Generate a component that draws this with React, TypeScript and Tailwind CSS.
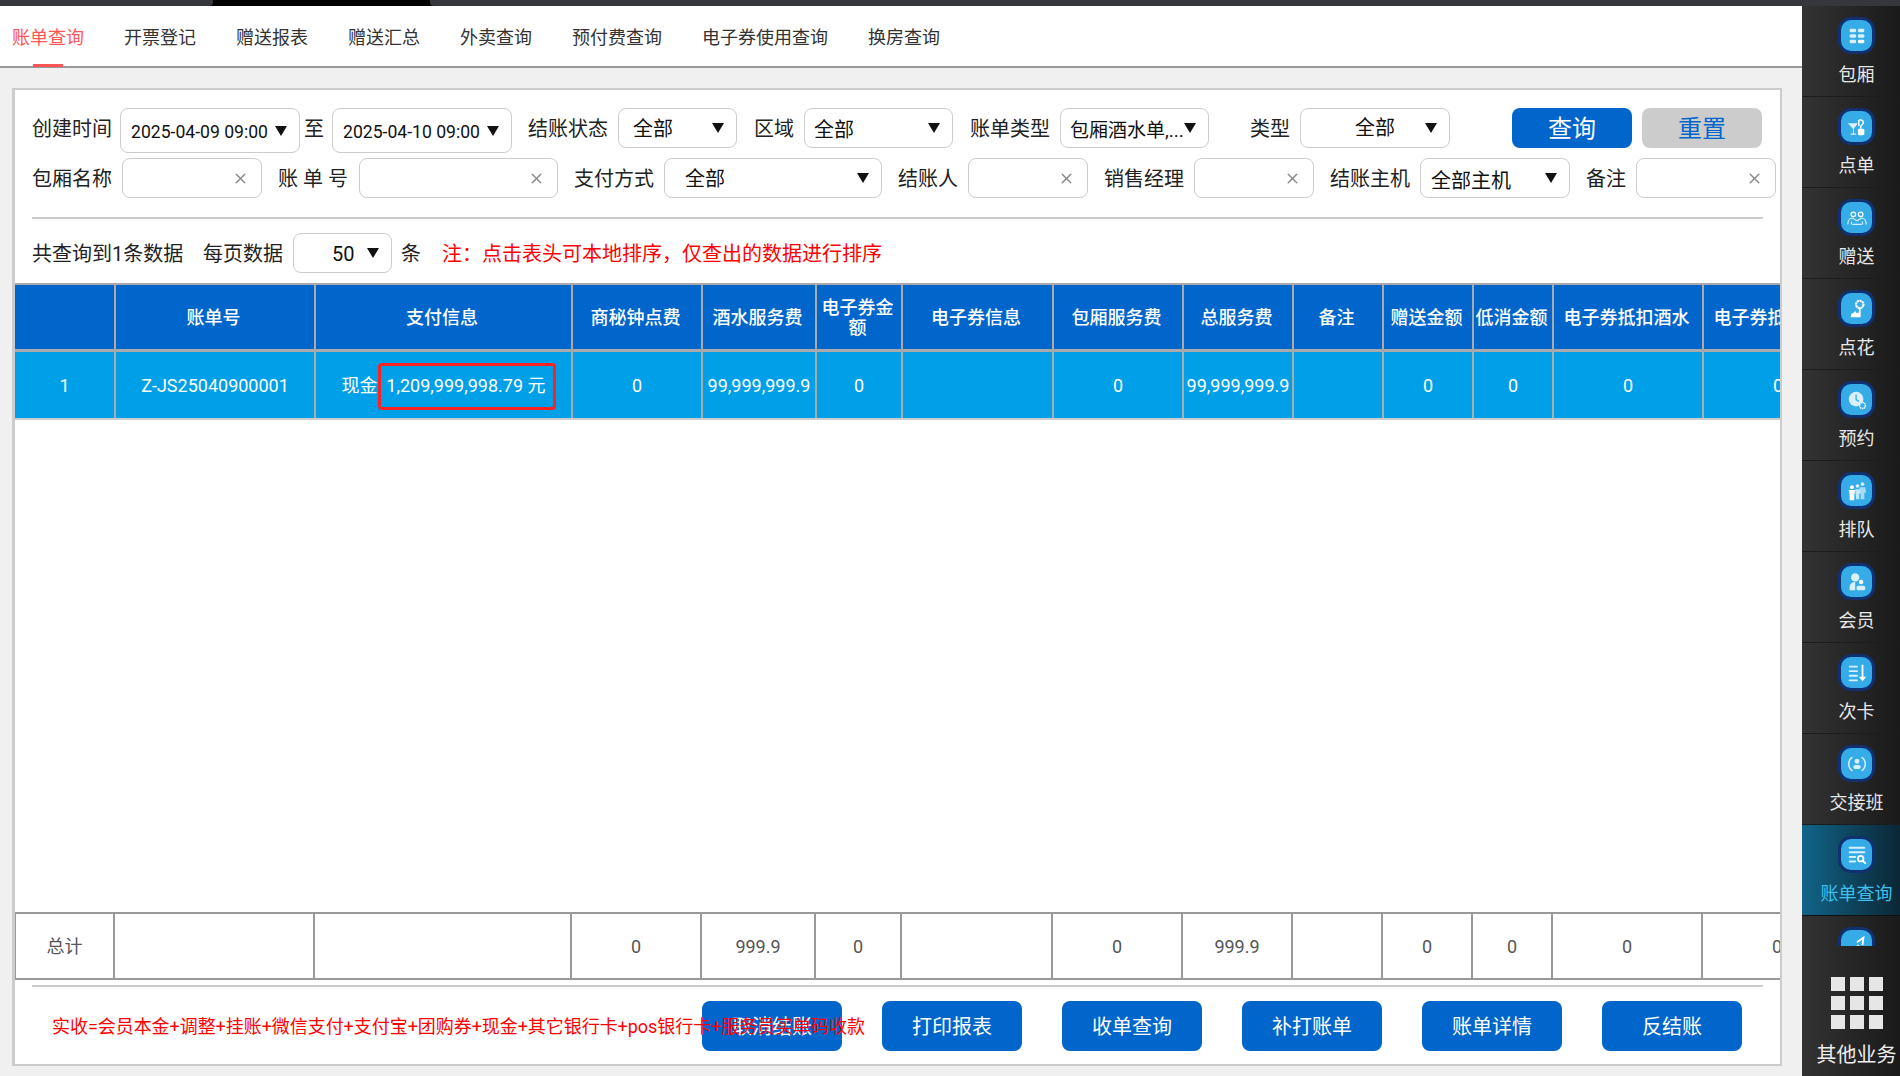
import React from 'react';
import { X } from 'lucide-react';

const COLS =
  'grid grid-cols-[101px_200px_257px_130px_114px_86px_151px_130px_110px_90px_90px_80px_150px_150px]';
const TOTAL_COLS =
  'grid grid-cols-[99px_200px_257px_130px_114px_86px_151px_130px_110px_90px_90px_80px_150px_150px]';

const headers = [
  '',
  '账单号',
  '支付信息',
  '商秘钟点费',
  '酒水服务费',
  '电子券金额',
  '电子券信息',
  '包厢服务费',
  '总服务费',
  '备注',
  '赠送金额',
  '低消金额',
  '电子券抵扣酒水',
  '电子券抵扣包厢',
];
const rowData = ['1', 'Z-JS25040900001', '', '0', '99,999,999.9', '0', '', '0', '99,999,999.9', '', '0', '0', '0', '0'];
const totals = ['总计', '', '', '0', '999.9', '0', '', '0', '999.9', '', '0', '0', '0', '0'];

const tabs = ['账单查询', '开票登记', '赠送报表', '赠送汇总', '外卖查询', '预付费查询', '电子券使用查询', '换房查询'];

const Arrow = () => (
  <svg width="12" height="10" viewBox="0 0 12 10" className="shrink-0">
    <polygon points="0,0 12,0 6,10" fill="#111" />
  </svg>
);

const Label = ({ className, children }: { className: string; children: React.ReactNode }) => (
  <span className={`shrink-0 whitespace-pre text-[20px] leading-[42px] text-[#222] ${className}`}>{children}</span>
);

const Select = ({
  className,
  text,
  textClass,
}: {
  className: string;
  text: string;
  textClass: string;
}) => (
  <div className={`flex h-10 shrink-0 items-center justify-between rounded-lg border border-[#ccc] bg-white pr-3 ${className}`}>
    <span className={`whitespace-nowrap text-[20px] text-[#111] ${textClass}`}>{text}</span>
    <Arrow />
  </div>
);

const DateBox = ({ className, text }: { className: string; text: string }) => (
  <div className={`flex h-[45px] shrink-0 items-center justify-between rounded-lg border border-[#ccc] bg-white pl-[10px] pr-[12px] ${className}`}>
    <span className="whitespace-nowrap pt-[3px] text-[17.6px] text-[#111]">{text}</span>
    <Arrow />
  </div>
);

const ClearInput = ({ className }: { className: string }) => (
  <div className={`flex h-10 shrink-0 items-center justify-end rounded-lg border border-[#ccc] bg-white pr-[12px] ${className}`}>
    <X size={17} strokeWidth={2} className="text-[#888]" />
  </div>
);

const Btn = ({ text }: { text: string }) => (
  <div className="flex h-[50px] w-[140px] items-center justify-center rounded-lg bg-[#0066cc] pt-[1px] text-[20px] text-white">
    {text}
  </div>
);

const L = '#d8f0ff';
const W = '#ffffff';

const icons: Record<string, React.ReactNode> = {
  room: (
    <>
      <rect x="4" y="4" width="7" height="4" rx="1.5" fill={L} />
      <rect x="13" y="4" width="7" height="4" rx="1.5" fill={L} />
      <rect x="4" y="10" width="7" height="4" rx="1.5" fill={L} />
      <rect x="13" y="10" width="7" height="4" rx="1.5" fill={L} />
      <rect x="4" y="16" width="7" height="4" rx="1.5" fill={L} />
      <rect x="13" y="16" width="7" height="4" rx="1.5" fill={W} />
    </>
  ),
  order: (
    <>
      <path d="M2 8h11l-4.500 6v5H11v1.500H5V19h2.500v-5z" fill={L} />
      <path d="M14 11V5a3 3 0 0 1 5 2c0 2-3 2.500-3 5v2" stroke={W} strokeWidth="1.600" fill="none" />
      <rect x="13" y="14" width="7" height="7" rx="1.500" fill={W} />
    </>
  ),
  gift: (
    <>
      <circle cx="8" cy="8" r="2.500" fill="none" stroke={W} strokeWidth="1.300" />
      <circle cx="16" cy="8" r="2.500" fill="none" stroke={W} strokeWidth="1.300" />
      <path d="M2 19c0-4 2-7 5-7l5 3 5-3c3 0 5 3 5 7M6 19v-3M18 19v-3M7 19h10" fill="none" stroke={L} strokeWidth="1.300" />
    </>
  ),
  flower: (
    <>
      <circle cx="15" cy="7" r="4" fill="none" stroke={W} strokeWidth="2.400" strokeDasharray="2.400 0.600" />
      <path d="M15 11v6" stroke={W} strokeWidth="2" />
      <path d="M5 21l1-4c2 0 3-1 4-3l1 2h5v5z" fill={W} />
    </>
  ),
  clock: (
    <>
      <circle cx="11" cy="11" r="8" fill={L} />
      <path d="M11 6v5.500l3 2" stroke="#35ace8" strokeWidth="1.400" fill="none" />
      <circle cx="18" cy="18" r="3.200" fill="#35ace8" stroke={W} strokeWidth="1.600" strokeDasharray="1.500 0.600" />
    </>
  ),
  queue: (
    <>
      <circle cx="18" cy="4.500" r="2" fill={L} />
      <path d="M15 8h6l1 6h-2v7h-4v-7h-2z" fill={L} opacity="0.700" />
      <circle cx="12.500" cy="6.500" r="2" fill={L} />
      <path d="M10 10h5l1 5h-1.500v6h-3.500z" fill={L} opacity="0.850" />
      <circle cx="6.500" cy="8" r="2.200" fill={W} />
      <path d="M3 11h7l-1 5v6H4v-6z" fill={W} />
    </>
  ),
  member: (
    <>
      <circle cx="10" cy="7" r="4.500" fill={L} />
      <path d="M4 21v-4a6 6 0 0 1 6-5v9z" fill={L} />
      <circle cx="16.500" cy="12" r="2.500" fill={W} />
      <rect x="11.500" y="16" width="9.500" height="5" rx="2" fill={L} />
    </>
  ),
  card: (
    <>
      <rect x="3" y="4" width="10" height="2" rx="1" fill={L} />
      <rect x="3" y="9" width="10" height="2" rx="1" fill={L} />
      <rect x="3" y="14" width="10" height="2" rx="1" fill={L} />
      <rect x="3" y="19" width="10" height="2" rx="1" fill={L} />
      <path d="M17 3h2v13h3l-4 5-4-5h3z" fill={W} />
    </>
  ),
  shift: (
    <>
      <path d="M7 4.500a9 9 0 0 0 0 15M17 4.500a9 9 0 0 1 0 15" fill="none" stroke={L} strokeWidth="1.600" />
      <circle cx="12" cy="9" r="2.600" fill={L} />
      <rect x="8" y="13" width="8" height="4.500" rx="2" fill={L} />
    </>
  ),
  bill: (
    <>
      <rect x="3" y="3" width="18" height="2.200" rx="1" fill={L} />
      <rect x="3" y="8" width="18" height="2.200" rx="1" fill={L} />
      <rect x="3" y="13" width="8" height="2.200" rx="1" fill={L} />
      <rect x="3" y="18" width="8" height="2.200" rx="1" fill={L} />
      <circle cx="16" cy="16" r="3" fill="none" stroke={W} strokeWidth="2" />
      <path d="M18 18l3.500 3.500" stroke={W} strokeWidth="2" />
    </>
  ),
  chart: <path d="M4 20l10-9M12 8l7-5-1 8M4 22h17" fill="none" stroke={W} strokeWidth="2" />,
};

const Icon = ({ name }: { name: string }) => (
  <div className="h-[37px] w-[37px] shrink-0 rounded-[13px] bg-[#10306f] p-[3px]">
    <div className="flex h-full w-full items-center justify-center rounded-[10px] bg-[#35ace8]">
      <svg width="22" height="22" viewBox="0 0 24 24">
        {icons[name]}
      </svg>
    </div>
  </div>
);

const sideItems = [
  ['room', '包厢'],
  ['order', '点单'],
  ['gift', '赠送'],
  ['flower', '点花'],
  ['clock', '预约'],
  ['queue', '排队'],
  ['member', '会员'],
  ['card', '次卡'],
  ['shift', '交接班'],
];

export default function App() {
  return (
    <div className="flex h-[1076px] w-[1900px] flex-col overflow-hidden bg-black font-['Roboto','Noto_Sans_CJK_SC',sans-serif]">
      {/* top strip */}
      <div className="flex h-[6px] shrink-0">
        <div className="w-[213px] rounded-br-[4px] bg-[#36373d]" />
        <div className="w-[217px] bg-black" />
        <div className="flex-1 rounded-bl-[4px] bg-[#36373d]" />
      </div>

      <div className="flex min-h-0 flex-1">
        <div className="flex min-w-0 flex-1 flex-col bg-[#f0f0f0]">
          {/* tabs */}
          <div className="flex h-[62px] shrink-0 gap-10 border-b-2 border-[#999] bg-white pl-3">
            {tabs.map((t, i) => (
              <div key={t} className="relative flex h-[60px] items-center pt-[2px]">
                <span className={`whitespace-nowrap text-[18px] ${i === 0 ? 'text-[#f55]' : 'text-[#333]'}`}>{t}</span>
                {i === 0 && <div className="absolute bottom-[-1px] left-[21px] h-[3px] w-[30px] bg-[#f55]" />}
              </div>
            ))}
          </div>

          {/* panel */}
          <div className="mb-[10px] ml-3 mr-5 mt-5 flex min-h-0 flex-1 flex-col border-2 border-l-[3px] border-[#ccc] bg-white">
            <div className="mt-[18px] flex h-[50px] shrink-0 items-start pl-[17px]">
              <Label className="w-20">创建时间</Label>
              <DateBox className="ml-2 w-[180px]" text="2025-04-09 09:00" />
              <Label className="ml-1 w-5">至</Label>
              <DateBox className="ml-2 w-[180px]" text="2025-04-10 09:00" />
              <Label className="ml-4 w-20">结账状态</Label>
              <Select className="ml-[10px] w-[119px]" text="全部" textClass="pl-[14px] pt-[2px]" />
              <Label className="ml-[17px] w-10">区域</Label>
              <Select className="ml-[10px] w-[149px]" text="全部" textClass="pl-[9px] pt-1" />
              <Label className="ml-[17px] w-20">账单类型</Label>
              <Select className="ml-[10px] w-[149px] !pr-[12px]" text="包厢酒水单,..." textClass="pl-[9px] pt-[6px] !text-[19px]" />
              <Label className="ml-[41px] w-10">类型</Label>
              <Select className="ml-[10px] w-[150px]" text="全部" textClass="pl-[54px]" />
              <div className="ml-[62px] flex h-10 w-[120px] items-center justify-center rounded-lg bg-[#0066cc] pt-[1px] text-[24px] text-white">
                查询
              </div>
              <div className="ml-[10px] flex h-10 w-[120px] items-center justify-center rounded-lg bg-[#ccc] pt-[1px] text-[24px] text-[#0066cc]">
                重置
              </div>
            </div>

            <div className="flex h-10 shrink-0 items-start pl-[17px]">
              <Label className="w-20">包厢名称</Label>
              <ClearInput className="ml-[10px] w-[140px]" />
              <Label className="ml-4 w-[70px]">账 单 号</Label>
              <ClearInput className="ml-[11px] w-[199px]" />
              <Label className="ml-4 w-20">支付方式</Label>
              <Select className="ml-[10px] w-[218px]" text="全部" textClass="pl-5 pt-[2px]" />
              <Label className="ml-4 w-[60px]">结账人</Label>
              <ClearInput className="ml-[10px] w-[120px]" />
              <Label className="ml-4 w-20">销售经理</Label>
              <ClearInput className="ml-[10px] w-[120px]" />
              <Label className="ml-4 w-20">结账主机</Label>
              <Select className="ml-[10px] w-[150px]" text="全部主机" textClass="pl-[10px] pt-[6px]" />
              <Label className="ml-4 w-10">备注</Label>
              <ClearInput className="ml-[10px] w-[140px]" />
            </div>

            <div className="ml-[17px] mr-[17px] mt-[19px] h-[2px] shrink-0 bg-[#ccc]" />

            <div className="mt-[14px] flex h-10 shrink-0 items-start pl-[17px]">
              <Label className="w-[150px]">共查询到1条数据</Label>
              <Label className="ml-[21px] w-20">每页数据</Label>
              <div className="ml-[10px] flex h-10 w-[99px] items-center justify-between rounded-lg border border-[#ccc] pl-[38px] pr-3">
                <span className="pt-[2px] text-[20px] text-[#111]">50</span>
                <Arrow />
              </div>
              <Label className="ml-[9px] w-5">条</Label>
              <span className="ml-[21px] whitespace-nowrap text-[20px] leading-[42px] text-[#f00]">
                注：点击表头可本地排序，仅查出的数据进行排序
              </span>
            </div>

            {/* table */}
            <div className="mt-[10px] flex min-h-0 flex-1 flex-col overflow-hidden">
              <div className={`${COLS} h-[69px] shrink-0 border-b-[3px] border-t-2 border-[#aaa] bg-[#0066cc]`}>
                {headers.map((h, i) => (
                  <div
                    key={i}
                    className="flex items-center justify-center border-r-2 border-[#aaa] pr-[3px] pt-[2px] text-center text-[18px] font-medium leading-[20px] text-white"
                  >
                    {h}
                  </div>
                ))}
              </div>
              <div className={`${COLS} h-[68px] shrink-0 border-b-2 border-[#ccc] bg-[#00a0e9]`}>
                {rowData.map((c, i) => (
                  <div
                    key={i}
                    className="relative flex items-center justify-center whitespace-nowrap border-r-2 border-[#aaa] text-[18px] text-white"
                  >
                    {i === 2 ? (
                      <>
                        现金: 1,209,999,998.79 元
                        <div className="absolute left-[62px] top-[11px] h-[47px] w-[178px] rounded-[4px] border-[3px] border-[#f22]" />
                      </>
                    ) : (
                      c
                    )}
                  </div>
                ))}
              </div>
              <div className="min-h-0 flex-1" />
              <div className={`${TOTAL_COLS} h-[68px] shrink-0 border-y-2 border-l border-[#999] bg-white`}>
                {totals.map((c, i) => (
                  <div
                    key={i}
                    className="flex items-center justify-center whitespace-nowrap border-r-2 border-[#999] text-[18px] text-[#555]"
                  >
                    {c}
                  </div>
                ))}
              </div>
            </div>

            <div className="ml-[17px] mr-[17px] mt-[5px] h-[2px] shrink-0 bg-[#ccc]" />

            <div className="relative mb-[13px] mt-[14px] flex shrink-0 justify-end gap-10 pr-[38px]">
              <Btn text="取消结账" />
              <Btn text="打印报表" />
              <Btn text="收单查询" />
              <Btn text="补打账单" />
              <Btn text="账单详情" />
              <Btn text="反结账" />
              <span className="absolute left-[37px] top-[14px] whitespace-nowrap text-[18px] leading-[24px] tracking-[-0.05px] text-[#f00]">
                实收=会员本金+调整+挂账+微信支付+支付宝+团购券+现金+其它银行卡+pos银行卡+服务员买单码收款
              </span>
            </div>
          </div>
        </div>

        {/* right menu */}
        <div className="flex w-[98px] shrink-0 flex-col bg-gradient-to-r from-[#333] to-[#1a1a1a]">
          {sideItems.map(([name, text]) => (
            <div
              key={name}
              className="flex h-[91px] shrink-0 flex-col items-center border-b border-[#1c1c1c] pl-[11px] pt-[11px]"
            >
              <Icon name={name} />
              <span className="mt-[9px] whitespace-nowrap text-[18px] leading-[24px] text-[#e8e8e8]">{text}</span>
            </div>
          ))}
          <div className="flex h-[91px] shrink-0 flex-col items-center border-b border-[#111] bg-gradient-to-r from-[#106589] to-[#0a2736] pl-[11px] pt-[11px]">
            <Icon name="bill" />
            <span className="mt-[9px] whitespace-nowrap text-[18px] leading-[24px] text-[#3fc0ea]">账单查询</span>
          </div>
          <div className="flex h-[30px] shrink-0 justify-center overflow-hidden pl-[11px] pt-[11px]">
            <Icon name="chart" />
          </div>
          <div className="flex min-h-0 flex-1 flex-col items-center pl-[11px] pt-[31px]">
            <div className="grid grid-cols-[14px_14px_14px] gap-[5px]">
              {[0, 1, 2, 3, 4, 5, 6, 7, 8].map((n) => (
                <div key={n} className="h-[14px] w-[14px] bg-[#e6e6e6]" />
              ))}
            </div>
            <span className="mt-[14px] whitespace-nowrap text-[20px] leading-[24px] text-[#eee]">其他业务</span>
          </div>
        </div>
      </div>
    </div>
  );
}
